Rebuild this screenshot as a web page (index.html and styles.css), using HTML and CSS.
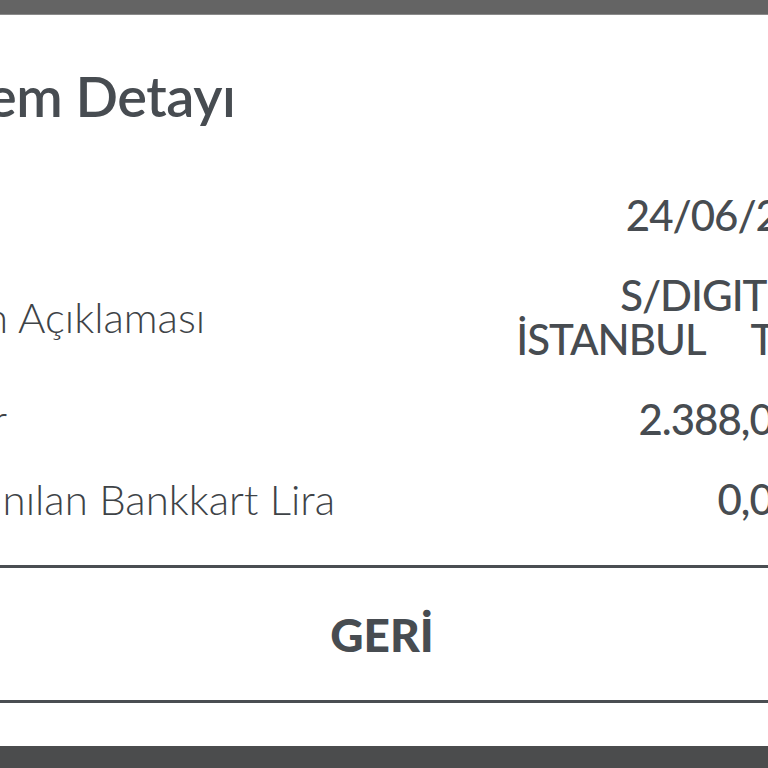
FILE: index.html
```html
<!DOCTYPE html>
<html lang="tr">
<head>
<meta charset="utf-8">
<link rel="stylesheet" href="styles.css">
</head>
<body>
<div class="screen">
  <div class="topbar"></div>
  <div class="dialog">
    <h1 class="title">İşlem Detayı</h1>
    <div class="rows">
      <div class="row">
        <span class="label">Tarih</span>
        <span class="value">24/06/2024</span>
      </div>
      <div class="row">
        <span class="label">İşlem Açıklaması</span>
        <span class="value"><span class="line">S/DIGITURK</span><span class="line split"><span>İSTANBUL</span><span>TR</span></span></span>
      </div>
      <div class="row">
        <span class="label">Tutar</span>
        <span class="value">2.388,00 TL</span>
      </div>
      <div class="row">
        <span class="label">Kullanılan Bankkart Lira</span>
        <span class="value">0,00 TL</span>
      </div>
    </div>
    <div class="divider"></div>
    <div class="button">GERİ</div>
    <div class="divider"></div>
    <div class="bottom-space"></div>
  </div>
  <div class="bottombar"></div>
</div>
</body>
</html>
```
FILE: styles.css
```css
html, body {
  margin: 0;
  padding: 0;
  background: #ffffff;
}
body {
  width: 768px;
  height: 768px;
  overflow: hidden;
  font-family: "Lato", "Noto Sans", sans-serif;
  color: #474c51;
}
.screen {
  display: flex;
  flex-direction: column;
  height: 768px;
}
.topbar {
  height: 14px;
  background: #646464;
  border-bottom: 1px solid #8a8a8a;
  flex: none;
}
.dialog {
  flex: none;
  width: 934px;
  margin-left: -85px;
  background: #ffffff;
  display: flex;
  flex-direction: column;
}
.title {
  margin: 0;
  padding-top: 46px;
  font-size: 56px;
  line-height: 70px;
  font-weight: 600;
  letter-spacing: -0.5px;
  color: #474c51;
  padding-left: 20px;
}
.rows {
  margin-top: 44px;
  display: flex;
  flex-direction: column;
}
.row {
  display: flex;
  justify-content: space-between;
  align-items: center;
  padding: 18px 0;
  font-size: 42px;
  line-height: 44px;
}
.label {
  font-weight: 300;
  color: #3e4347;
}
.value {
  font-weight: 500;
  text-align: right;
  display: flex;
  flex-direction: column;
  align-items: flex-end;
  letter-spacing: -1px;
}
.line {
  display: block;
  white-space: pre;
}
.split {
  display: flex;
  gap: 45px;
  margin-right: 49px;
}
.divider {
  height: 3px;
  background: #4a4e52;
  margin-left: 85px;
  width: 768px;
}
.rows + .divider {
  margin-top: 26px;
}
.button {
  height: 132px;
  display: flex;
  align-items: center;
  justify-content: center;
  font-size: 46px;
  font-weight: 900;
  color: #474c51;
}
.bottom-space {
  height: 43px;
}
.bottombar {
  flex: 1;
  background: #4b4c4d;
}
```
